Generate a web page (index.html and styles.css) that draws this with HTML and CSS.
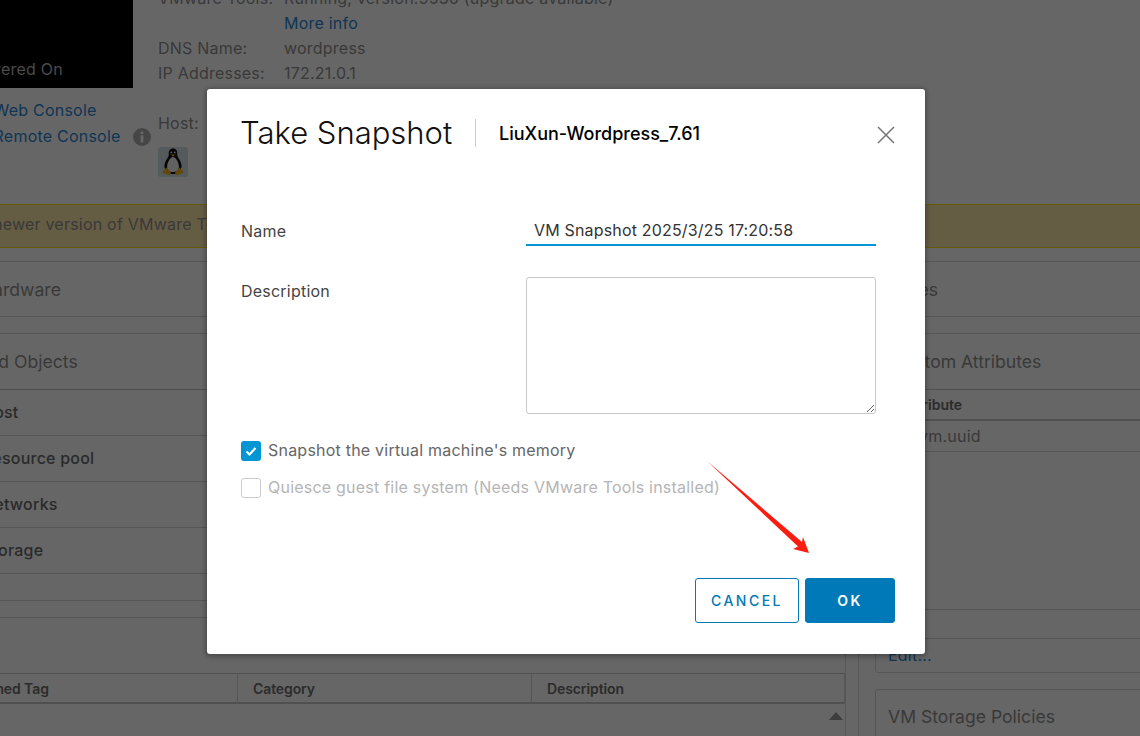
FILE: index.html
```html
<!DOCTYPE html>
<html lang="en">
<head>
<meta charset="utf-8">
<title>Take Snapshot</title>
<link rel="stylesheet" href="styles.css">
</head>
<body>
<div class="page">
  <section class="summary">
    <div class="thumb-col">
      <div class="thumb"><span class="power">Powered On</span></div>
      <a class="link console-web">Launch Web Console</a>
      <div class="console-remote"><a class="link">Launch Remote Console</a>
        <svg class="info" viewBox="0 0 18 18" aria-hidden="true"><circle cx="9" cy="9" r="9" fill="#b0b0b0"/><circle cx="9" cy="4.8" r="1.500" fill="#fff"/><rect x="7.600" y="7.400" width="2.800" height="7" fill="#fff"/></svg>
      </div>
    </div>
    <div class="details">
      <dl class="facts">
        <dt>VMware Tools:</dt><dd>Running, version:9536 (upgrade available)</dd>
        <dt></dt><dd><a class="link">More info</a></dd>
        <dt>DNS Name:</dt><dd>wordpress</dd>
        <dt>IP Addresses:</dt><dd>172.21.0.1</dd>
      </dl>
      <div class="host">Host:</div>
      <div class="os-icon">
        <svg viewBox="0 0 30 30" width="30" height="30" aria-hidden="true">
          <rect width="30" height="30" rx="3" fill="#d4e0e8"/>
          <path d="M15 1.500c-3.200 0-4.400 2.400-4.200 5.400.1 2-.8 3.200-2 5.200-1.500 2.500-2.800 5.300-2.300 8.400l2.500 4 4 2.500h4l4-2.500 2.500-4c.5-3.100-.9-5.900-2.400-8.400-1.200-2-2-3.200-1.900-5.200C19.400 3.900 18.200 1.500 15 1.500z" fill="#111"/>
          <path d="M15 10c-2.900 0-5.900 5.700-5.900 10 0 3.400 2.600 5 5.900 5s5.900-1.600 5.900-5c0-4.300-3-10-5.900-10z" fill="#f2f2f2"/>
          <path d="M12.800 7.600h4.400L15 9.800z" fill="#f0b400"/>
          <path d="M8.800 20.500 4.500 24.600l.8 1.700 6.200 1.900 1.500-2.400zM21.200 20.500l4.300 4.100-.8 1.700-6.200 1.900-1.500-2.400z" fill="#f3b61b"/>
          <circle cx="13.300" cy="5.400" r=".9" fill="#eee"/><circle cx="16.700" cy="5.400" r=".9" fill="#eee"/>
        </svg>
      </div>
    </div>
  </section>

  <div class="banner">A newer version of VMware Tools is available for this virtual machine.</div>

  <div class="columns">
    <div class="col">
      <div class="card card-short"><h2>VM Hardware</h2></div>
      <div class="card">
        <h2>Related Objects</h2>
        <ul class="rel">
          <li>Host</li>
          <li>Resource pool</li>
          <li>Networks</li>
          <li>Storage</li>
        </ul>
        <div class="rel-foot"></div>
      </div>
      <div class="card card-open">
        <h2>Tags</h2>
        <div class="tag-head">
          <span>Assigned Tag</span><span>Category</span><span>Description</span>
        </div>
        <div class="tag-body"><span class="arrow-up"></span></div>
      </div>
    </div>
    <div class="splitter"></div>
    <div class="col col-right">
      <div class="card card-short"><h2>Notes</h2></div>
      <div class="card card-attrs">
        <h2>Custom Attributes</h2>
        <div class="attr-head">Attribute</div>
        <div class="attr-row">vm.uuid</div>
        <div class="attr-space"></div>
        <div class="attr-gap"></div>
        <div class="attr-foot"><a class="link">Edit...</a></div>
      </div>
      <div class="card card-open"><h2>VM Storage Policies</h2></div>
    </div>
  </div>
</div>

<div class="backdrop"></div>

<div class="modal" role="dialog" aria-label="Take Snapshot">
  <header class="modal-head">
    <h1>Take Snapshot</h1>
    <span class="vm-name">LiuXun-Wordpress_7.61</span>
    <svg class="close" viewBox="0 0 18 18" aria-hidden="true"><path d="M1 1l16 16M17 1 1 17" stroke="#747474" stroke-width="1.500" fill="none"/></svg>
  </header>
  <div class="form">
    <label class="lbl lbl-name">Name</label>
    <input class="name-input" type="text" value="VM Snapshot 2025/3/25 17:20:58">
    <label class="lbl lbl-desc">Description</label>
    <textarea class="desc"></textarea>
  </div>
  <div class="checks">
    <div class="check on">
      <span class="box"><svg viewBox="0 0 20 20" width="20" height="20" aria-hidden="true"><path d="M5.500 10.500l3 3 6-6.500" stroke="#fff" stroke-width="2.200" fill="none"/></svg></span>
      <span class="check-text">Snapshot the virtual machine's memory</span>
    </div>
    <div class="check off">
      <span class="box"></span>
      <span class="check-text">Quiesce guest file system (Needs VMware Tools installed)</span>
    </div>
  </div>
  <footer class="actions">
    <button class="btn btn-outline">CANCEL</button>
    <button class="btn btn-solid">OK</button>
  </footer>
</div>

<svg class="red-arrow" viewBox="0 0 110 100" width="110" height="100" aria-hidden="true">
  <path d="M1 1 L96 82 L97 77 L103 93 L87 89 L92 86.500 Z" fill="#fb1d10"/>
</svg>
</body>
</html>
```
FILE: styles.css
```css
* { box-sizing: border-box; }
html, body { margin: 0; height: 100%; }
body {
  width: 1140px;
  height: 736px;
  overflow: hidden;
  position: relative;
  font-family: Inter, "Liberation Sans", sans-serif;
  font-size: 16px;
  letter-spacing: .22px;
  color: #8f8f8f;
  background: #fff;
}
.page {
  margin: -14px 0 0 -64px;
  width: 1300px;
}
.link { color: #2a86d2; }

.summary {
  display: flex;
  height: 218px;
}
.thumb-col { width: 222px; white-space: nowrap; }
.thumb {
  width: 197px;
  height: 102px;
  background: #000;
  display: flex;
  align-items: flex-end;
  padding: 0 0 9px 0;
}
.power { color: #b8b8b8; font-size: 16px; line-height: 20px; margin-left: 32px; }
.console-web { display: block; margin: 12px 0 0 -4px; line-height: 20px; }
.console-remote { display: flex; align-items: center; margin: 6px 0 0 -4px; line-height: 20px; }
.info { width: 18px; height: 18px; margin-left: 12px; margin-top: 2px; flex: none; }
.details { flex: 1; }
.facts {
  display: grid;
  grid-template-columns: 126px 1fr;
  grid-auto-rows: 25px;
  margin: 0;
  line-height: 25px;
}
.facts dt, .facts dd { margin: 0; white-space: nowrap; }
.host { margin-top: 27px; line-height: 20px; }
.os-icon { margin-top: 14px; height: 30px; }

.banner {
  height: 44px;
  background: #fde6aa;
  border-top: 1px solid #ffdc0b;
  border-bottom: 1px solid #ffdc0b;
  line-height: 38px;
  padding-left: 41px;
  white-space: nowrap;
  margin-bottom: 13px;
}

.columns { display: flex; }
.col { width: 910px; flex: none; display: flex; flex-direction: column; gap: 16px; }
.col-right { width: 330px; }
.splitter { width: 1px; flex: none; margin: 0 16px 0 12px; background: #d8d8d8; }
.card {
  background: #fff;
  border: 1px solid #d8d8d8;
  border-radius: 3px;
}
.card h2 {
  margin: 0;
  font-size: 17.6px;
  font-weight: 400;
  letter-spacing: 0;
  line-height: 55px;
  padding-left: 10px;
  white-space: nowrap;
}
.col-right .card h2 { padding-left: 12px; }
.col-right .card-short h2 { padding-left: 13px; }
.col-right .card-attrs h2 { padding-left: 16px; }
.col-right .card-open h2 { line-height: 53px; }
.card-short { height: 56px; }
.rel { list-style: none; margin: 0; padding: 0; border-top: 1px solid #c9c9c9; color: #6a6a6a; font-weight: 500; }
.rel li { height: 46px; line-height: 45px; padding-left: 45px; border-bottom: 1px solid #d8d8d8; }
.rel-foot { height: 26px; }
.card-open { border-bottom: 0; border-radius: 3px 3px 0 0; }
.tag-head {
  display: grid;
  grid-template-columns: 301px 294px 1fr;
  height: 31px;
  border-top: 1px solid #c9c9c9;
  border-bottom: 2px solid #c9c9c9;
  font-size: 14px;
  font-weight: 600;
  letter-spacing: -.1px;
  line-height: 30px;
  color: #6e6e6e;
}
.tag-head span { padding-left: 15px; border-right: 1px solid #d8d8d8; }
.tag-head span:first-child { padding-left: 21px; }
.tag-body { height: 40px; position: relative; }
.arrow-up {
  position: absolute;
  left: 892px;
  top: 8px;
  border: 7px solid transparent;
  border-top: 0;
  border-bottom: 8px solid #9a9a9a;
}
.attr-head {
  height: 32px;
  border-top: 1px solid #c9c9c9;
  border-bottom: 2px solid #c9c9c9;
  font-size: 14px;
  font-weight: 600;
  letter-spacing: 0;
  line-height: 30px;
  padding-left: 27px;
  color: #6e6e6e;
}
.attr-row { height: 31px; line-height: 31px; padding-left: 43px; border-bottom: 1px solid #d8d8d8; }
.attr-space { height: 158px; border-bottom: 1px solid #d8d8d8; }
.attr-gap { height: 29px; border-bottom: 1px solid #d8d8d8; }
.attr-foot { padding: 6px 0 0 12px; line-height: 20px; }
.card-attrs { height: 340px; }

.backdrop {
  position: absolute;
  inset: 0;
  background: rgba(0, 0, 0, .6);
}

.modal {
  position: absolute;
  left: 207px;
  top: 89px;
  width: 718px;
  height: 565px;
  background: #fff;
  border-radius: 3px;
  box-shadow: 0 1px 4px 2px rgba(0, 0, 0, .25);
  padding: 0 30px 31px 34px;
  display: flex;
  flex-direction: column;
}
.modal-head {
  display: flex;
  align-items: center;
  height: 88px;
  flex: none;
}
.modal-head h1 {
  margin: 0 0 0 -1px;
  width: 236px;
  font-size: 31px;
  font-weight: 300;
  letter-spacing: 0;
  color: #111;
  border-right: 1px solid #ccc;
  line-height: 28px;
  white-space: nowrap;
}
.vm-name { margin-left: 23px; font-size: 18px; font-weight: 500; letter-spacing: 0; color: #000; white-space: nowrap; }
.close { width: 18px; height: 18px; margin-left: auto; margin-top: 3px; }
.form {
  display: grid;
  grid-template-columns: 285px 350px;
  margin-top: 33px;
  flex: none;
}
.lbl { font-size: 16px; line-height: 20px; color: #444; }
.lbl-name { padding-top: 11px; }
.lbl-desc { padding-top: 35px; }
.name-input {
  height: 36px;
  border: 0;
  border-bottom: 2px solid #0095d3;
  padding: 6px 8px 0 8px;
  font: 400 16px Inter, "Liberation Sans", sans-serif;
  letter-spacing: .17px;
  color: #333;
  outline: none;
  background: transparent;
}
.desc {
  display: block;
  margin-top: 31px;
  height: 137px;
  width: 350px;
  border: 1px solid #c8c8c8;
  border-radius: 3px;
  outline: none;
  resize: both;
}
.checks { margin-top: 27px; display: flex; flex-direction: column; gap: 17px; flex: none; }
.check { display: flex; align-items: center; gap: 7px; height: 20px; white-space: nowrap; }
.check-text { padding-bottom: 2px; }
.box { width: 20px; height: 20px; border-radius: 3px; flex: none; display: block; }
.on { color: #666; }
.on .box { background: #0095d3; }
.off { color: #b5b5b5; }
.off .box { border: 1px solid #ccc; }
.actions { margin-top: auto; display: flex; justify-content: flex-end; gap: 6px; }
.btn {
  height: 45px;
  border-radius: 3px;
  font: 600 14px Inter, "Liberation Sans", sans-serif;
  letter-spacing: 2.500px;
}
.btn-outline { width: 104px; background: #fff; border: 1px solid #0079b8; color: #0079b8; font-weight: 500; }
.btn-solid { width: 90px; background: #0079b8; border: 1px solid #0079b8; color: #fff; }
.red-arrow { position: absolute; left: 706px; top: 460px; }
```
